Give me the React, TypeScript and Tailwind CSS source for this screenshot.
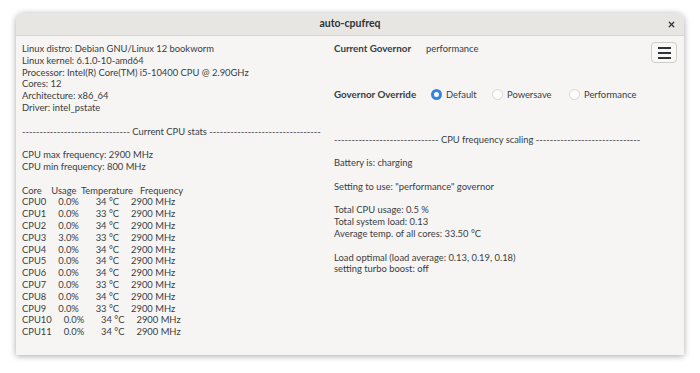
import { X } from "lucide-react";

const systemInfo = [
  "Linux distro: Debian GNU/Linux 12 bookworm",
  "Linux kernel: 6.1.0-10-amd64",
  "Processor: Intel(R) Core(TM) i5-10400 CPU @ 2.90GHz",
  "Cores: 12",
  "Architecture: x86_64",
  "Driver: intel_pstate",
];

const cores = [
  ["0", "0.0", "34"],
  ["1", "0.0", "33"],
  ["2", "0.0", "34"],
  ["3", "3.0", "33"],
  ["4", "0.0", "34"],
  ["5", "0.0", "34"],
  ["6", "0.0", "34"],
  ["7", "0.0", "33"],
  ["8", "0.0", "34"],
  ["9", "0.0", "33"],
  ["10", "0.0", "34"],
  ["11", "0.0", "34"],
];

function Blank() {
  return <div className="h-[11.8px]" />;
}

function Radio({ label, checked }: { label: string; checked?: boolean }) {
  return (
    <label className="flex items-center gap-[4px]">
      {checked ? (
        <span className="w-[11px] h-[11px] rounded-full border-[3px] border-[#3584e4] bg-white" />
      ) : (
        <span className="w-[11px] h-[11px] rounded-full border border-[#d4d2cf] bg-white" />
      )}
      <span>{label}</span>
    </label>
  );
}

export default function App() {
  return (
    <div
      className="w-[700px] h-[373px] bg-white pt-[13px] pl-[16px] text-[#3a3d3f]"
      style={{ fontFamily: "Lato, 'Liberation Sans', sans-serif" }}
    >
      <div className="w-[668px] h-[342px] rounded-t-[8px] bg-[#f6f5f4] shadow-[0_1px_6px_rgba(0,0,0,0.35)] flex flex-col overflow-hidden">
        {/* Header bar */}
        <div className="h-[23px] shrink-0 bg-[#e8e6e3] border-b border-[#d8d5d1] flex items-center justify-center relative">
          <span className="text-[10.5px] font-bold text-[#2e3436]">auto-cpufreq</span>
          <X className="absolute right-[8px] top-[7px] w-[9px] h-[9px] text-[#2e3436]" strokeWidth={3.5} />
        </div>

        {/* Content */}
        <div className="flex pl-[6px] pr-[7px] pt-[7px] text-[9.4px] leading-[11.8px] whitespace-pre">
          {/* Left column */}
          <div className="w-[312px] shrink-0">
            {systemInfo.map((line) => (
              <div key={line}>{line}</div>
            ))}
            <Blank />
            <div>------------------------------- Current CPU stats --------------------------------</div>
            <Blank />
            <div>CPU max frequency: 2900 MHz</div>
            <div>CPU min frequency: 800 MHz</div>
            <Blank />
            <div>Core    Usage  Temperature   Frequency</div>
            {cores.map(([n, usage, temp]) => (
              <div key={n}>{`CPU${n}     ${usage}%       ${temp} °C     2900 MHz`}</div>
            ))}
          </div>

          {/* Right column */}
          <div className="flex-1">
            <div className="flex justify-between">
              <div>
                <div className="flex">
                  <span className="w-[92px] font-bold text-[9.8px]">Current Governor</span>
                  <span>performance</span>
                </div>
                <div className="flex items-center mt-[34px]">
                  <span className="w-[97px] font-bold text-[9.8px]">Governor Override</span>
                  <div className="flex items-center">
                    <div className="w-[61px]"><Radio label="Default" checked /></div>
                    <div className="w-[77px]"><Radio label="Powersave" /></div>
                    <Radio label="Performance" />
                  </div>
                </div>
              </div>
              <button className="w-[26px] h-[21px] -mt-[1px] rounded-[4px] border border-[#cfcdca] bg-[#f8f8f7] flex flex-col items-center justify-center gap-[3px]">
                <span className="w-[13px] h-[2px] bg-[#2e3436]" />
                <span className="w-[13px] h-[2px] bg-[#2e3436]" />
                <span className="w-[13px] h-[2px] bg-[#2e3436]" />
              </button>
            </div>
            <div className="mt-[33px]">------------------------------ CPU frequency scaling ------------------------------</div>
            <Blank />
            <div>Battery is: charging</div>
            <Blank />
            <div>Setting to use: "performance" governor</div>
            <Blank />
            <div>Total CPU usage: 0.5 %</div>
            <div>Total system load: 0.13</div>
            <div>Average temp. of all cores: 33.50 °C</div>
            <Blank />
            <div>Load optimal (load average: 0.13, 0.19, 0.18)</div>
            <div>setting turbo boost: off</div>
          </div>
        </div>
      </div>
    </div>
  );
}
